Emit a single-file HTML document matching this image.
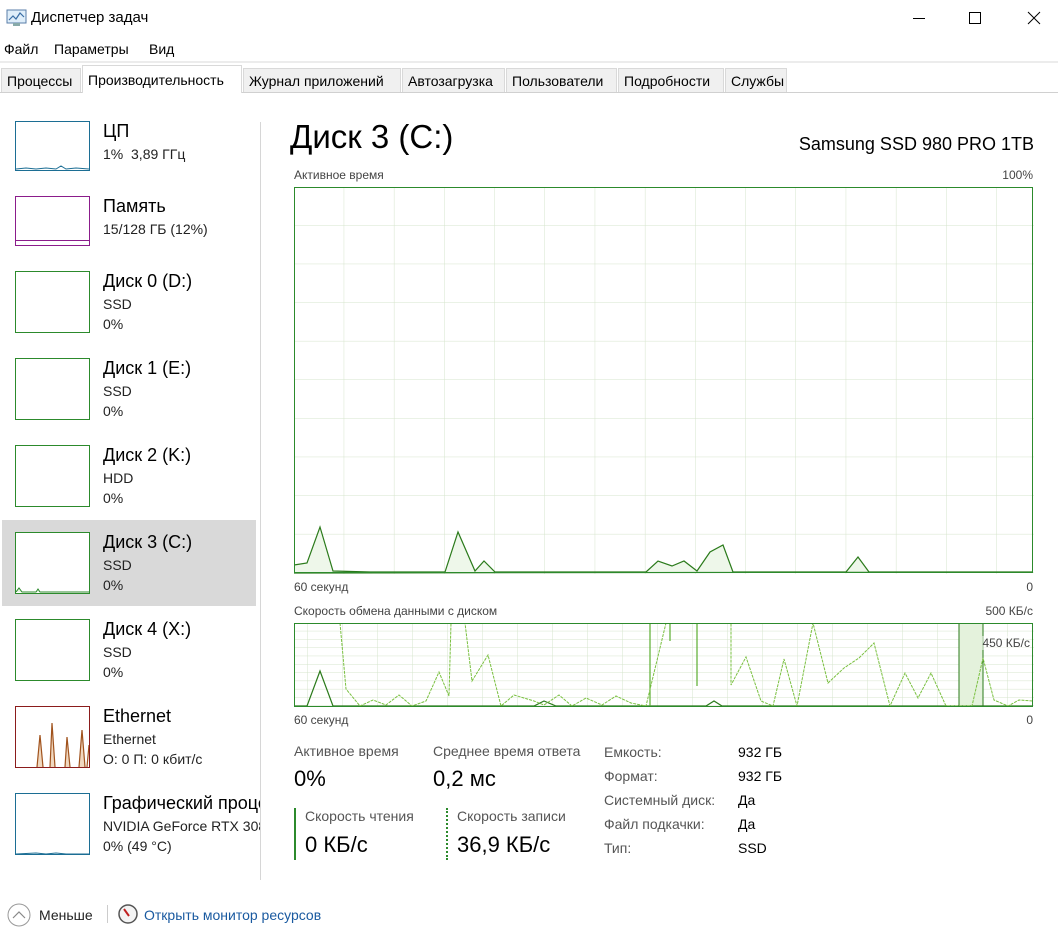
<!DOCTYPE html>
<html><head><meta charset="utf-8"><style>
*{margin:0;padding:0;box-sizing:border-box}
body{width:1058px;height:945px;background:#fff;font-family:"Liberation Sans","DejaVu Sans",sans-serif;color:#000;position:relative;overflow:hidden}
.a{position:absolute;white-space:nowrap}
.tab{position:absolute;top:68px;height:24px;background:#f0f0f0;border:1px solid #d9d9d9;border-bottom:none;font-size:14px;padding:4px 0 0 5px}
.th{position:absolute;left:15px;width:75px;height:62px;border:1px solid}
.nm{font-size:18px}
.sb{font-size:14px;color:#222}
.lb{font-size:12px;color:#444}
.st{font-size:14px;color:#555}
.bv{font-size:22px}
</style></head><body>
<svg class="a" style="left:6px;top:8px" width="22" height="20" viewBox="0 0 22 20"><rect x="1" y="2" width="19" height="13" fill="#dfeefa" stroke="#5a7ea8"/><polyline points="3,12 7,8 10,11 14,5 18,9" fill="none" stroke="#3a6ea5" stroke-width="1.2"/><rect x="7" y="15" width="7" height="3" fill="#8aa"/></svg>
<div class="a" style="left:31px;top:9px;font-size:15px">Диспетчер задач</div>
<div class="a" style="left:913px;top:18px;width:12px;height:1px;background:#000"></div>
<div class="a" style="left:969px;top:12px;width:12px;height:12px;border:1px solid #000"></div>
<svg class="a" style="left:1027px;top:11px" width="14" height="14"><path d="M1 1L13 13M13 1L1 13" stroke="#000"/></svg>
<div class="a" style="left:4px;top:41px;font-size:14px">Файл</div>
<div class="a" style="left:54px;top:41px;font-size:14px">Параметры</div>
<div class="a" style="left:149px;top:41px;font-size:14px">Вид</div>
<div class="a" style="left:0;top:61px;width:1058px;height:31px;background:#fff;border-top:2px solid #ececec"></div>
<div class="a" style="left:0;top:92px;width:1058px;height:1px;background:#d0d0d0"></div>
<div class="tab" style="left:1px;width:80px">Процессы</div>
<div class="tab" style="left:82px;width:160px;top:65px;height:28px;background:#fff;padding-top:6px">Производительность</div>
<div class="tab" style="left:243px;width:158px">Журнал приложений</div>
<div class="tab" style="left:402px;width:103px">Автозагрузка</div>
<div class="tab" style="left:506px;width:111px">Пользователи</div>
<div class="tab" style="left:618px;width:106px">Подробности</div>
<div class="tab" style="left:725px;width:62px">Службы</div>

<div class="a" style="left:260px;top:122px;width:1px;height:758px;background:#d6d6d6"></div>
<div class="a" style="left:2px;top:520px;width:254px;height:86px;background:#d9d9d9"></div>

<div class="th" style="top:121px;height:50px;border-color:#1c6e94"></div>
<svg class="a" style="left:16px;top:160px" width="73" height="10"><polyline points="0,9 10,8 20,9 30,8 40,9 45,6 50,9 60,8 73,9" fill="none" stroke="#1c6e94"/></svg>
<div class="a nm" style="left:103px;top:121px">ЦП</div>
<div class="a sb" style="left:103px;top:146px">1%&nbsp; 3,89 ГГц</div>

<div class="th" style="top:196px;height:50px;border-color:#8b1c8b"></div>
<div class="a" style="left:16px;top:240px;width:73px;height:1px;background:#8b1c8b"></div>
<div class="a nm" style="left:103px;top:196px">Память</div>
<div class="a sb" style="left:103px;top:221px">15/128 ГБ (12%)</div>

<div class="th" style="top:271px;border-color:#2c8a2c"></div>
<div class="a nm" style="left:103px;top:271px">Диск 0 (D:)</div>
<div class="a sb" style="left:103px;top:296px">SSD</div><div class="a sb" style="left:103px;top:316px">0%</div>

<div class="th" style="top:358px;border-color:#2c8a2c"></div>
<div class="a nm" style="left:103px;top:358px">Диск 1 (E:)</div>
<div class="a sb" style="left:103px;top:383px">SSD</div><div class="a sb" style="left:103px;top:403px">0%</div>

<div class="th" style="top:445px;border-color:#2c8a2c"></div>
<div class="a nm" style="left:103px;top:445px">Диск 2 (K:)</div>
<div class="a sb" style="left:103px;top:470px">HDD</div><div class="a sb" style="left:103px;top:490px">0%</div>

<div class="th" style="top:532px;border-color:#2c8a2c;background:#fff"></div>
<svg class="a" style="left:16px;top:580px" width="73" height="13"><polyline points="0,12 3,8 6,12 20,12 22,9 24,12 73,12" fill="#e6f4e0" stroke="#2c8a2c"/></svg>
<div class="a nm" style="left:103px;top:532px">Диск 3 (C:)</div>
<div class="a sb" style="left:103px;top:557px">SSD</div><div class="a sb" style="left:103px;top:577px">0%</div>

<div class="th" style="top:619px;border-color:#2c8a2c"></div>
<div class="a nm" style="left:103px;top:619px">Диск 4 (X:)</div>
<div class="a sb" style="left:103px;top:644px">SSD</div><div class="a sb" style="left:103px;top:664px">0%</div>

<div class="th" style="top:706px;border-color:#8b1c1c"></div>
<svg class="a" style="left:16px;top:715px" width="73" height="52"><path d="M21,52 L24,20 L27,52 M34,52 L36,8 L39,52 M49,52 L51,22 L54,52 M63,52 L66,15 L69,52 M71,52 L73,30" fill="#f0d8c0" stroke="#a0521c" stroke-width="1.2"/></svg>
<div class="a nm" style="left:103px;top:706px">Ethernet</div>
<div class="a sb" style="left:103px;top:731px">Ethernet</div><div class="a sb" style="left:103px;top:751px">О: 0 П: 0 кбит/с</div>

<div class="th" style="top:793px;border-color:#1c6e94"></div>
<svg class="a" style="left:16px;top:850px" width="73" height="5"><polyline points="0,4 20,3 30,4 40,3 50,4 73,4" fill="none" stroke="#1c6e94"/></svg>
<div class="a" style="left:103px;top:793px;width:157px;overflow:hidden;font-size:18px">Графический процессор</div>
<div class="a sb" style="left:103px;top:818px;width:157px;overflow:hidden">NVIDIA GeForce RTX 3080</div>
<div class="a sb" style="left:103px;top:838px">0% (49 °C)</div>

<div class="a" style="left:290px;top:118px;font-size:33px">Диск 3 (C:)</div>
<div class="a" style="right:24px;top:134px;font-size:18px">Samsung SSD 980 PRO 1TB</div>
<div class="a lb" style="left:294px;top:168px">Активное время</div>
<div class="a lb" style="right:25px;top:168px">100%</div>

<svg class="a" style="left:294px;top:187px" width="740" height="387">
<defs><pattern id="g1" x="0" y="0" width="50.2" height="38.6" patternUnits="userSpaceOnUse"><path d="M50.2 0V38.6M0 38.6H50.2" stroke="#d6e4cc" fill="none"/></pattern>
<pattern id="g2" x="14" y="0" width="35" height="8.3" patternUnits="userSpaceOnUse"><path d="M35 0V8.3M0 8.3H35" stroke="#d6e4cc" fill="none"/></pattern></defs>
<rect x="0" y="0" width="740" height="387" fill="url(#g1)"/>
<polygon points="0,386 0,378 13,376 26,340 39,384 76,385 151,385 164,345 181,384 190,374 201,385 352,385 364,374 378,379 390,374 403,384 416,365 429,358 439,385 552,385 564,370 575,385 739,385" fill="#eef7ea" stroke="#2a7a1a" stroke-width="1.2"/>
<rect x="0.5" y="0.5" width="738" height="385" fill="none" stroke="#2c8a2c"/>
</svg>
<div class="a lb" style="left:294px;top:580px">60 секунд</div>
<div class="a lb" style="right:25px;top:580px">0</div>
<div class="a lb" style="left:294px;top:604px">Скорость обмена данными с диском</div>
<div class="a lb" style="right:25px;top:604px">500 КБ/с</div>

<svg class="a" style="left:294px;top:623px" width="740" height="84">
<rect x="0" y="0" width="740" height="84" fill="url(#g2)"/>
<rect x="665" y="0" width="24" height="83" fill="#e4f2dc"/>
<line x1="665" y1="0" x2="665" y2="83" stroke="#2a7a1a"/>
<line x1="689" y1="0" x2="689" y2="83" stroke="#2a7a1a"/>
<polyline points="0,83 13,83 26,48 39,83 240,83 250,78 262,83 412,83 420,78 428,83 739,83" fill="none" stroke="#2a7a1a" stroke-width="1.2"/>
<path d="M356,0V83M376,0V18M403,0V63" stroke="#5aae30" stroke-width="1.2"/>
<polyline points="46,0 52,66 66,83 79,77 92,82 105,72 118,83 132,78 145,49 155,73 157,0 171,0 178,58 194,32 207,83 220,72 240,78 250,82 265,72 278,83 292,75 308,82 322,73 337,80 352,83 372,0 437,0 437,62 452,34 467,78 479,83 490,36 503,83 519,0 534,60 550,45 565,35 580,20 596,83 611,50 624,75 637,50 652,83 665,83 678,83 689,35 700,77 714,83 725,77 739,78" fill="none" stroke="#7ac040" stroke-width="1" stroke-dasharray="3,1"/>
<rect x="0.5" y="0.5" width="738" height="83" fill="none" stroke="#2c8a2c"/>
</svg>
<div class="a lb" style="right:28px;top:636px;background:rgba(255,255,255,0.5)">450 КБ/с</div>
<div class="a lb" style="left:294px;top:713px">60 секунд</div>
<div class="a lb" style="right:25px;top:713px">0</div>

<div class="a st" style="left:294px;top:743px">Активное время</div>
<div class="a bv" style="left:294px;top:766px">0%</div>
<div class="a st" style="left:433px;top:743px">Среднее время ответа</div>
<div class="a bv" style="left:433px;top:766px">0,2 мс</div>
<div class="a" style="left:294px;top:808px;width:2px;height:52px;background:#2c8a2c"></div>
<div class="a st" style="left:305px;top:808px">Скорость чтения</div>
<div class="a bv" style="left:305px;top:832px">0 КБ/с</div>
<div class="a" style="left:446px;top:808px;width:0;height:52px;border-left:2px dotted #2c8a2c"></div>
<div class="a st" style="left:457px;top:808px">Скорость записи</div>
<div class="a bv" style="left:457px;top:832px">36,9 КБ/с</div>
<div class="a st" style="left:604px;top:740px;line-height:24px">Емкость:<br>Формат:<br>Системный диск:<br>Файл подкачки:<br>Тип:</div>
<div class="a" style="left:738px;top:740px;line-height:24px;font-size:14px">932 ГБ<br>932 ГБ<br>Да<br>Да<br>SSD</div>

<svg class="a" style="left:7px;top:903px" width="24" height="24"><circle cx="12" cy="12" r="11" fill="none" stroke="#999"/><path d="M6 15L12 9L18 15" fill="none" stroke="#888" stroke-width="1.2"/></svg>
<div class="a" style="left:39px;top:907px;font-size:14px;color:#222">Меньше</div>
<div class="a" style="left:107px;top:905px;width:1px;height:18px;background:#ccc"></div>
<svg class="a" style="left:118px;top:904px" width="20" height="20"><circle cx="10" cy="10" r="9" fill="#f4f4f4" stroke="#555" stroke-width="1.5"/><path d="M6 5L11 12" stroke="#c02020" stroke-width="2"/></svg>
<div class="a" style="left:144px;top:907px;font-size:14px;color:#1a5aa0">Открыть монитор ресурсов</div>
</body></html>
